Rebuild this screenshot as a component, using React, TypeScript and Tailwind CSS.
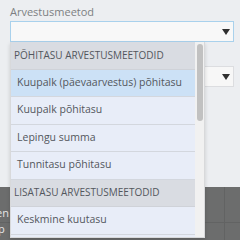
const groups = [
	{
		title: 'PÕHITASU ARVESTUSMEETODID',
		items: [
			'Kuupalk (päevaarvestus) põhitasu',
			'Kuupalk põhitasu',
			'Lepingu summa',
			'Tunnitasu põhitasu'
		]
	},
	{
		title: 'LISATASU ARVESTUSMEETODID',
		items: ['Keskmine kuutasu', 'Kuupalk lisatasu']
	}
];

function Caret() {
	return (
		<svg width="8" height="6" viewBox="0 0 8 6" className="shrink-0">
			<path d="M0 0 L8 0 L4 6 Z" fill="#2f2f2f" />
		</svg>
	);
}

function App(): JSX.Element {
	const selected = 'Kuupalk (päevaarvestus) põhitasu';

	return (
		<div className="relative w-[240px] h-[240px] overflow-hidden bg-[#eceef1] font-['Open_Sans',sans-serif]">
			<div className="flex flex-col h-full">
				<div className="pl-[10px] pr-[6px] pt-[4px]">
					<label className="block text-[11px] leading-[15px] text-[#7d7f82]">
						Arvestusmeetod
					</label>
					<div className="mt-[2px] h-[21px] flex items-center justify-end pr-[3px] bg-[#f8f8f8] border border-[#a9d1ec]">
						<Caret />
					</div>
					<div className="mt-[24px] h-[21px] flex items-center justify-end pr-[3px] bg-[#f7f7f7] border border-[#dcdde0]">
						<Caret />
					</div>
				</div>

				{/* table behind the overlay */}
				<div className="mt-auto h-[53px] bg-[#6c6d6d] relative text-[11px] text-[#e6e6e6]">
					<div className="flex flex-col pt-[18px] -ml-[14px] leading-[16px]">
						<span>Sten</span>
						<span>Lep</span>
					</div>
					<div className="absolute left-[224px] top-0 bottom-0 w-px bg-[#626363]" />
					<div className="absolute left-0 right-0 top-[35px] h-px bg-[#626363]" />
				</div>
			</div>

			{/* open dropdown */}
			<div className="absolute left-[10px] top-[42px] w-[195px] h-[196px] flex bg-[#f2f2f2] border-l border-b border-r border-[#d8d9db] shadow-[0_2px_4px_rgba(0,0,0,0.15)]">
				<ul className="flex-1 overflow-hidden text-[#53575d] whitespace-nowrap">
					{groups.map((g) => (
						<li key={g.title}>
							<div className="h-[27.5px] flex items-center pl-[3px] text-[10px] bg-[#d9dce2] border-b border-[#cfd2d8]">
								{g.title}
							</div>
							<ul>
								{g.items.map((item) => (
									<li
										key={item}
										className={`h-[27.5px] flex items-center pl-[6px] text-[10.5px] border-b border-[#d3d7de] ${
											item === selected ? 'bg-[#cce1f6]' : 'bg-[#e8edf8]'
										}`}>
										{item}
									</li>
								))}
							</ul>
						</li>
					))}
				</ul>
				<div className="w-[9px] bg-[#f1f1f1] flex justify-center">
					<div className="mt-[2px] w-[6px] h-[77px] rounded-full bg-[#c1c1c1]" />
				</div>
			</div>
		</div>
	);
}

export default App;
